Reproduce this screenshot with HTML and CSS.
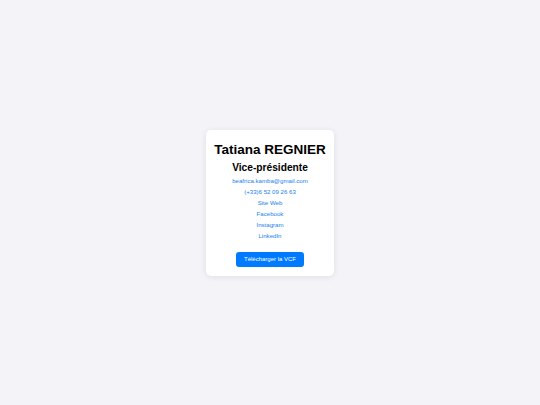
FILE: index.html
```html
<!DOCTYPE html>
<html lang="fr">
<head>
<meta charset="utf-8">
<title>Tatiana REGNIER</title>
<link rel="stylesheet" href="styles.css">
</head>
<body>
<main class="page">
  <section class="card">
    <h1 class="name">Tatiana REGNIER</h1>
    <h2 class="role">Vice-présidente</h2>
    <ul class="links">
      <li><a href="#">beafrica.kamba@gmail.com</a></li>
      <li><a href="#">(+33)6 52 09 26 63</a></li>
      <li><a href="#">Site Web</a></li>
      <li><a href="#">Facebook</a></li>
      <li><a href="#">Instagram</a></li>
      <li><a href="#">LinkedIn</a></li>
    </ul>
    <a class="btn" href="#">Télécharger la VCF</a>
  </section>
</main>
</body>
</html>
```
FILE: styles.css
```css
* { box-sizing: border-box; }
html, body {
  margin: 0;
  padding: 0;
  background: #f4f4f8;
  font-family: "Liberation Sans", Arial, sans-serif;
}
.page {
  min-height: 100vh;
  display: flex;
  align-items: center;
  justify-content: center;
}
.card {
  background: #fff;
  border-radius: 5px;
  box-shadow: 0 1px 6px rgba(0, 0, 0, 0.09);
  padding: 12px 8px 9px;
  text-align: center;
  display: flex;
  flex-direction: column;
  align-items: center;
}
.name {
  margin: 0;
  font-size: 13.5px;
  line-height: 16px;
  font-weight: bold;
  color: #000;
  white-space: nowrap;
}
.role {
  margin: 3px 0 0;
  font-size: 10.2px;
  line-height: 14px;
  font-weight: bold;
  color: #000;
}
.links {
  list-style: none;
  margin: 0.5px 0 0;
  padding: 0;
}
.links li {
  font-size: 6.1px;
  line-height: 11px;
}
.links a {
  color: #1a82ef;
  text-decoration: none;
}
.btn {
  margin-top: 10.5px;
  display: inline-block;
  width: 68px;
  height: 15px;
  line-height: 15px;
  background: #007bff;
  color: #fff;
  font-size: 6px;
  border-radius: 3px;
  text-decoration: none;
}
```
